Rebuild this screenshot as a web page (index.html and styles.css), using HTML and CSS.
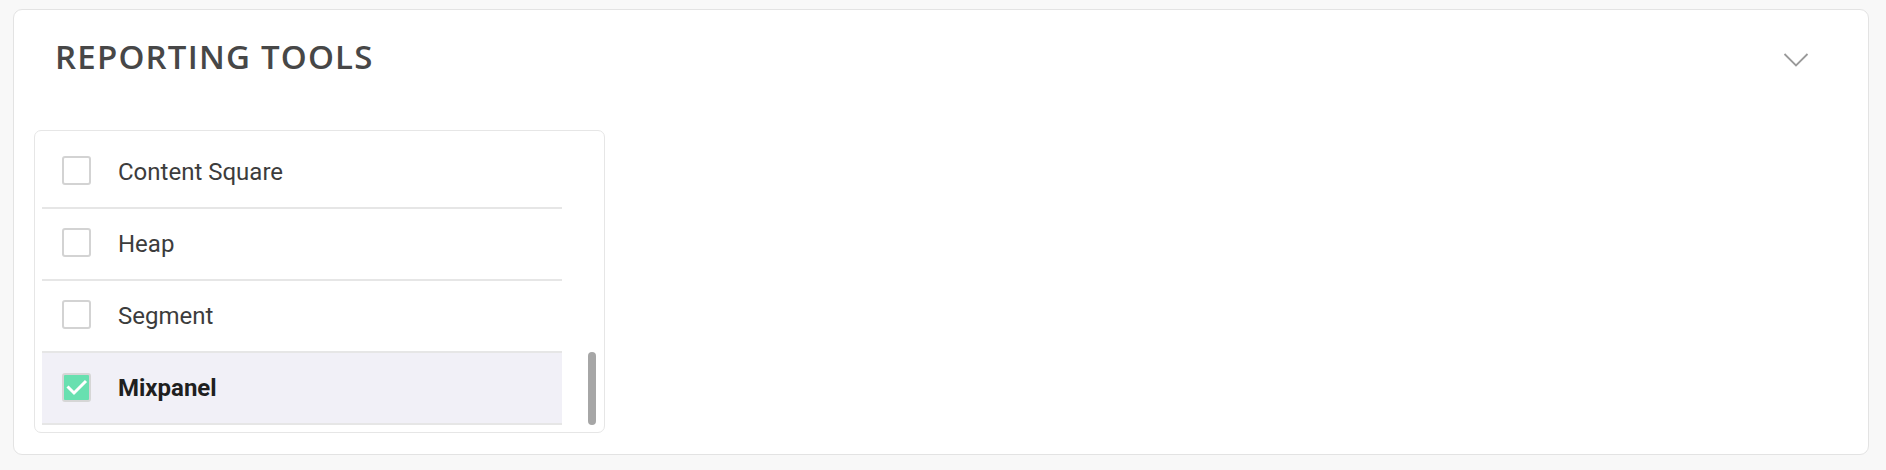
FILE: index.html
```html
<!DOCTYPE html>
<html lang="en">
<head>
<meta charset="utf-8">
<title>Reporting Tools</title>
<link rel="stylesheet" href="styles.css">
</head>
<body>
<section class="card">
  <header class="card-header">
    <h2 class="card-title">REPORTING TOOLS</h2>
    <svg class="chevron" width="26" height="16" viewBox="0 0 26 16" aria-hidden="true">
      <path d="M1.5 2 L13 13.5 L24.5 2" fill="none" stroke="#9a9a9a" stroke-width="1.8"/>
    </svg>
  </header>
  <div class="list-box">
    <ul class="list">
      <li class="item">
        <span class="checkbox"></span>
        <span class="label">Content Square</span>
      </li>
      <li class="item">
        <span class="checkbox"></span>
        <span class="label">Heap</span>
      </li>
      <li class="item">
        <span class="checkbox"></span>
        <span class="label">Segment</span>
      </li>
      <li class="item selected">
        <span class="checkbox checked">
          <svg width="25" height="25" viewBox="0 0 25 25" aria-hidden="true">
            <path d="M3.5 11.5 L10 18 L22 6" fill="none" stroke="#ffffff" stroke-width="3"/>
          </svg>
        </span>
        <span class="label">Mixpanel</span>
      </li>
    </ul>
    <div class="scroll-track">
      <div class="scroll-thumb"></div>
    </div>
  </div>
</section>
</body>
</html>
```

FILE: styles.css
```css
html, body {
  margin: 0;
  padding: 0;
  background: #f8f8f8;
}

body {
  padding: 9px 17px 15px 13px;
  font-family: Roboto, "Liberation Sans", sans-serif;
}

.card {
  box-sizing: border-box;
  height: 446px;
  background: #ffffff;
  border: 1px solid #e3e3e3;
  border-radius: 9px;
  padding: 27px 0 0 20px;
}

.card-header {
  display: flex;
  align-items: center;
  justify-content: space-between;
  height: 40px;
  margin-left: 21px;
  padding-right: 59px;
}

.card-title {
  margin: 0;
  font-family: "Open Sans", "DejaVu Sans", sans-serif;
  font-weight: 600;
  font-size: 33px;
  line-height: 40px;
  letter-spacing: 1.2px;
  color: #474747;
}

.chevron {
  display: block;
  margin-top: 5px;
}

.list-box {
  box-sizing: border-box;
  display: flex;
  width: 571px;
  height: 303px;
  margin-top: 53px;
  border: 1px solid #e6e6e6;
  border-radius: 7px;
  padding: 6px 8px 7px 7px;
}

.list {
  list-style: none;
  margin: 0;
  padding: 0;
  width: 520px;
}

.item {
  display: flex;
  align-items: center;
  gap: 27px;
  height: 70px;
  padding-left: 20px;
  border-bottom: 2px solid #e6e6e6;
}

.item.selected {
  background: #f1f0f7;
}

.checkbox {
  box-sizing: border-box;
  display: flex;
  align-items: center;
  justify-content: center;
  width: 29px;
  height: 29px;
  margin-top: -3px;
  border: 2px solid #d3d3d3;
  border-radius: 3px;
  background: #ffffff;
}

.checkbox.checked {
  background: #68e0b0;
  border-color: #d6d6d6;
  margin-top: -1px;
}

.checkbox svg {
  display: block;
}

.label {
  font-size: 24px;
  line-height: 30px;
  color: #3c3c3c;
}

.selected .label {
  font-weight: 700;
  color: #1f1f1f;
}

.scroll-track {
  display: flex;
  flex-direction: column;
  justify-content: flex-end;
  margin-left: 26px;
  padding-bottom: 0;
}

.scroll-thumb {
  width: 8px;
  height: 73px;
  border-radius: 4px;
  background: #a6a6a6;
}
```
